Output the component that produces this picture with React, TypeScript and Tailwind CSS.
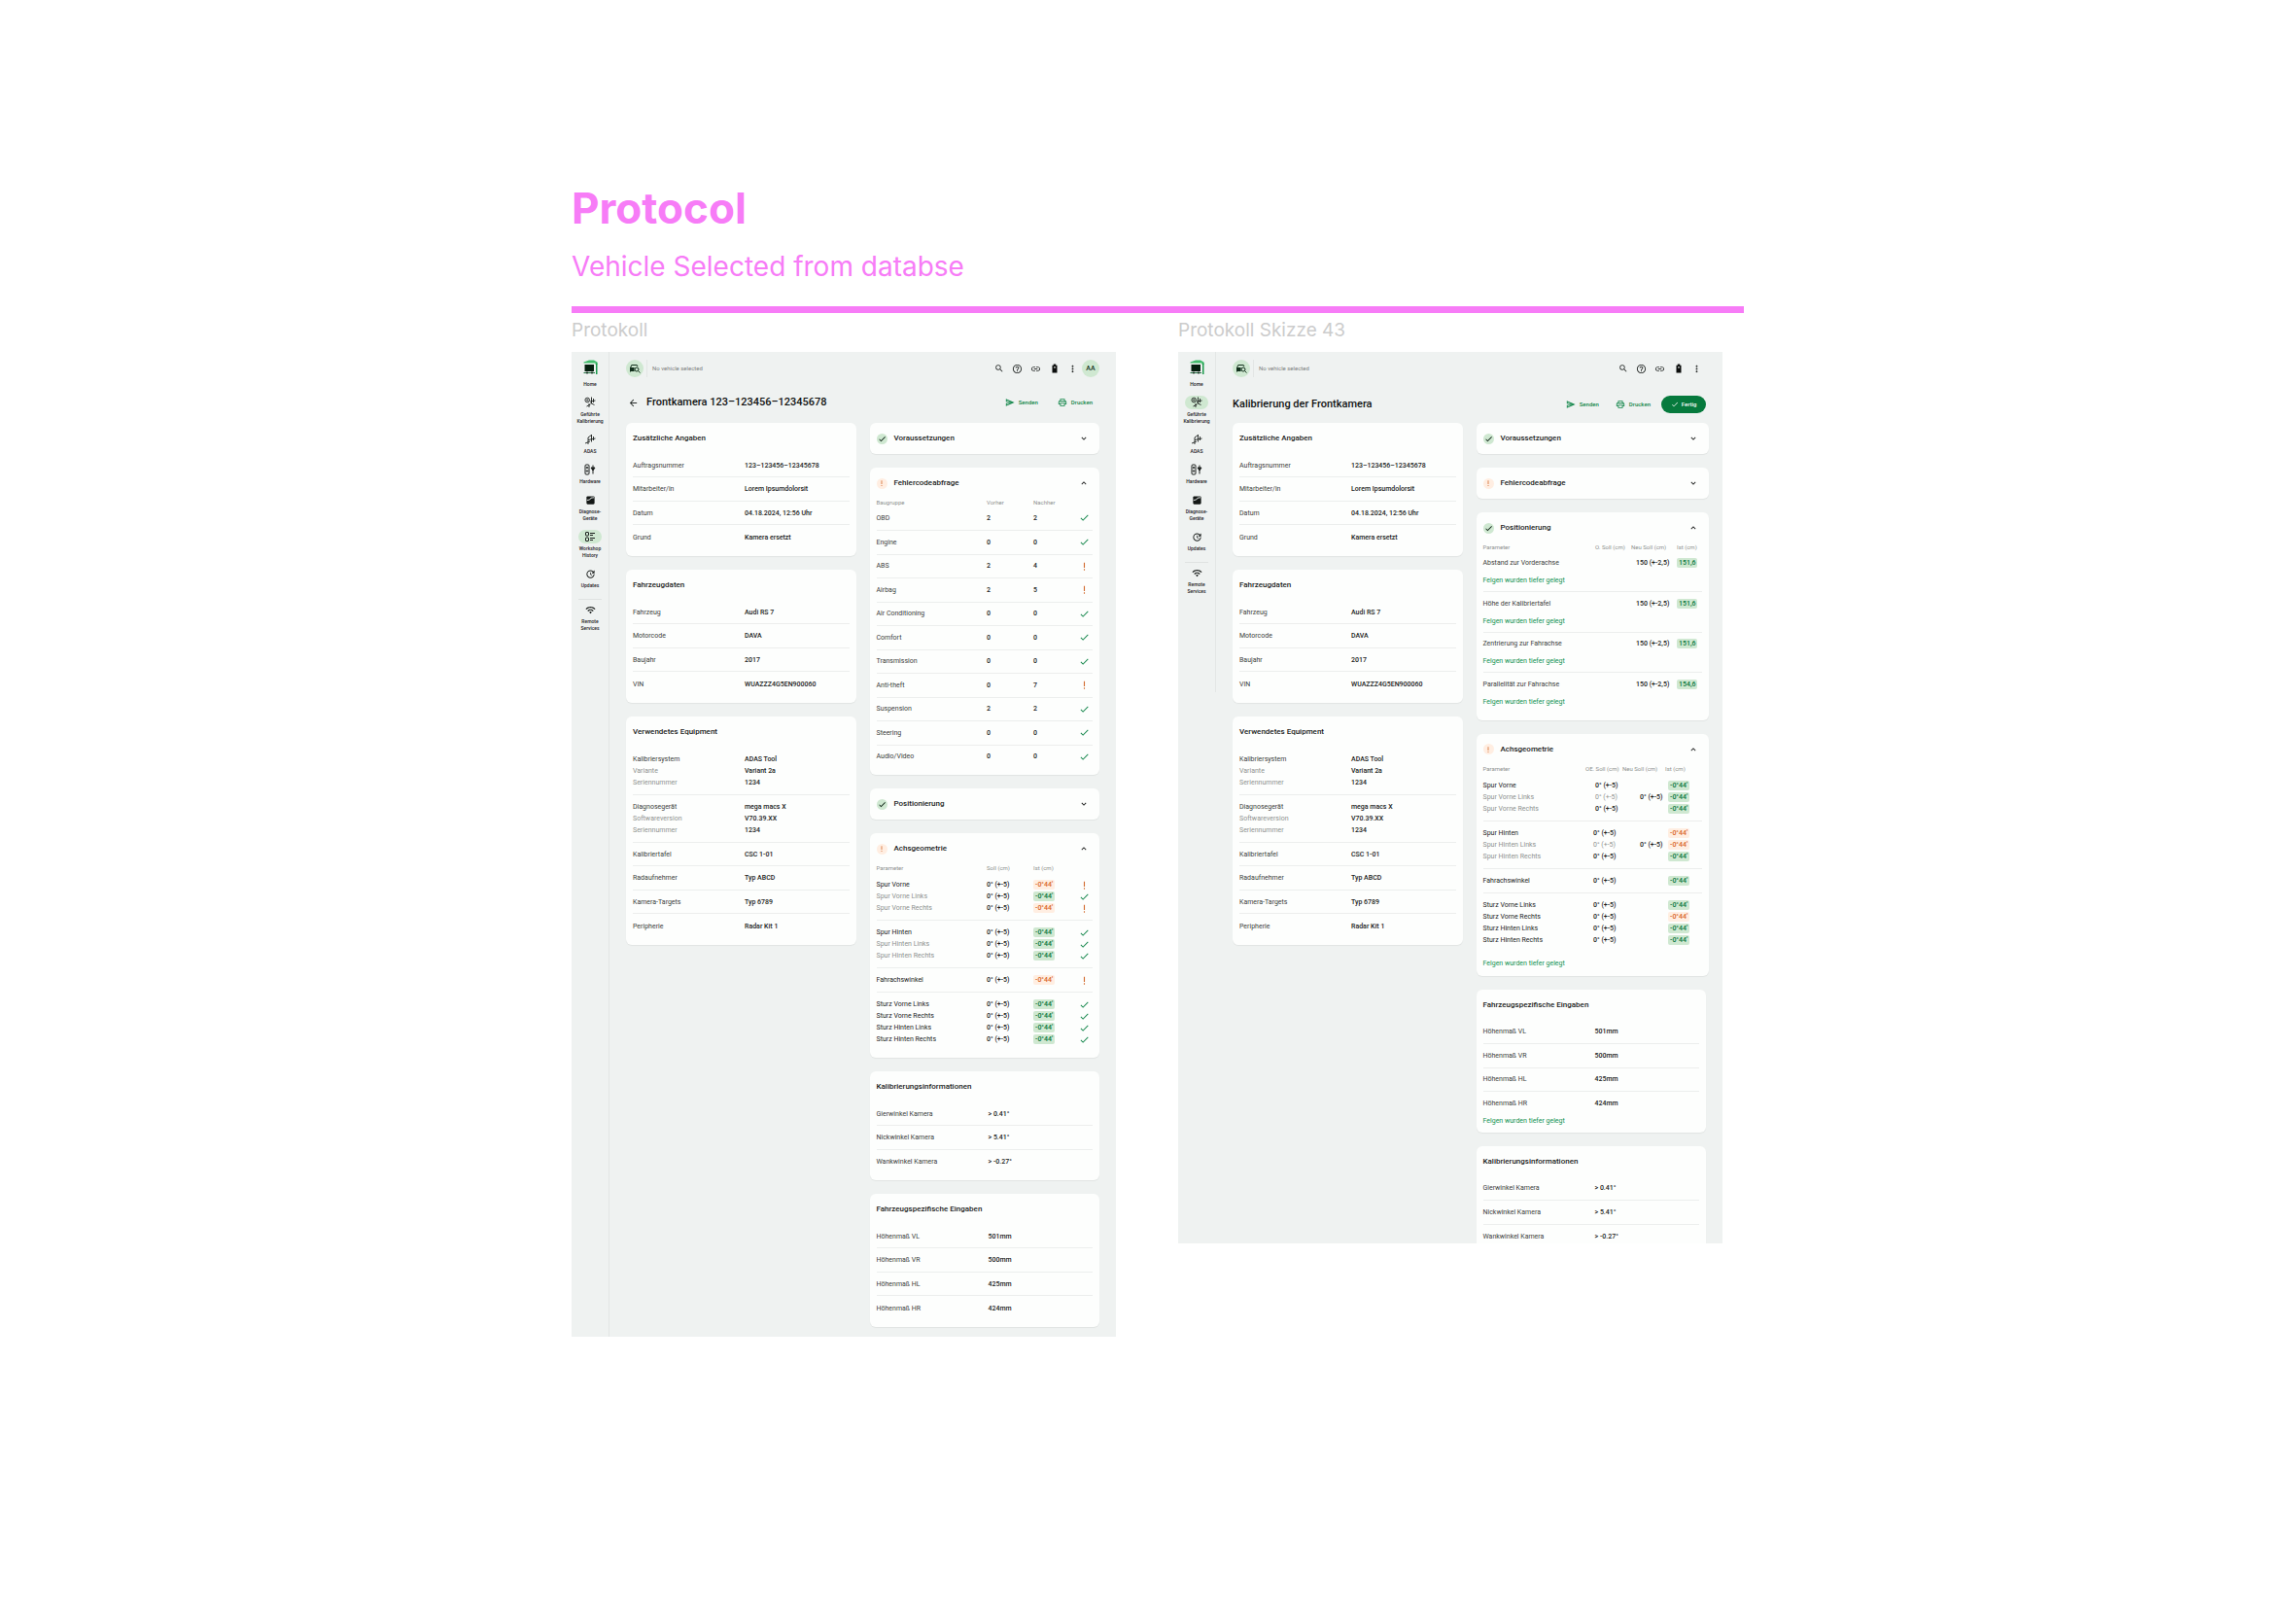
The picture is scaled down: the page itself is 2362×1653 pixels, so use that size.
import React from "react";
import type { ReactNode } from "react";
import {
  MdArrowBack,
  MdCheck,
  MdHelpOutline,
  MdKeyboardArrowDown,
  MdKeyboardArrowUp,
  MdLink,
  MdMoreVert,
  MdOutlinePrint,
  MdSearch,
  MdOutlineSend,
  MdUpdate,
  MdWifi,
} from "react-icons/md";

/* ---------- custom icons ---------- */

function HomeLogo() {
  return (
    <svg viewBox="0 0 30 32" className="h-[16px] w-[15px]" aria-hidden="true">
      <path d="M1 5 12 1h10l7 4v5h-4V7H1z" fill="#43bd6c" />
      <path d="M26 7h3v23h-3z" fill="#1c9a4c" />
      <path d="M3 10h19v14H3z" fill="#05200f" />
      <path d="M1 26h23v2H1z" fill="#1c6a3a" />
      <circle cx="8" cy="27" r="2" fill="#05200f" />
      <circle cx="18" cy="27" r="2" fill="#05200f" />
    </svg>
  );
}

function CalibrationIcon() {
  return (
    <svg viewBox="0 0 24 24" className="size-[12px]" fill="none" stroke="#1d211f" strokeWidth="1.8" aria-hidden="true">
      <circle cx="6.5" cy="7" r="4.6" />
      <circle cx="6.5" cy="7" r="1.4" />
      <path d="M15 1v13M12 10l11-2M5 20l8-4M10 14v8M13 13l8 4M19 4v8" />
    </svg>
  );
}

function AdasIcon() {
  return (
    <svg viewBox="0 0 24 24" className="size-[12px]" fill="none" stroke="#1d211f" strokeWidth="1.8" aria-hidden="true">
      <path d="M15 2v15M8 13l15-3M2 20l10-4M8 13v9M8 13V8l7-5M19 6v8" />
    </svg>
  );
}

function HardwareIcon() {
  return (
    <svg viewBox="0 0 24 24" className="size-[12px]" fill="none" stroke="#1d211f" strokeWidth="2" aria-hidden="true">
      <rect x="2" y="2" width="8" height="20" rx="2" />
      <circle cx="6" cy="8" r="1.5" />
      <circle cx="6" cy="15" r="1.5" />
      <path d="M18 3v18" />
      <path d="M14 8h8l-4 6z" fill="#1d211f" />
    </svg>
  );
}

function DeviceIcon() {
  return (
    <svg viewBox="0 0 24 24" className="size-[11px]" aria-hidden="true">
      <rect x="3" y="3" width="18" height="18" rx="2.5" fill="#141816" />
      <path d="M4 12l6-1 3-4 7-1" fill="none" stroke="#eff2f1" strokeWidth="2" />
    </svg>
  );
}

function HistoryIcon() {
  return (
    <svg viewBox="0 0 24 24" className="size-[12px]" fill="none" stroke="#1d211f" strokeWidth="2" aria-hidden="true">
      <rect x="3" y="3" width="6" height="7" rx="1" />
      <rect x="3" y="14" width="6" height="7" rx="1" />
      <path d="M12 5h10M12 9h6M12 15h10M12 19h6" />
    </svg>
  );
}

function CarSearchIcon() {
  return (
    <svg viewBox="0 0 24 24" className="size-[12px]" fill="none" stroke="#12301c" strokeWidth="2" aria-hidden="true">
      <path d="M3 19v-8l2.5-6h11L18 8" />
      <path d="M3 11h8M3 17h8" />
      <path d="M3 11h7v6H3z" fill="#12301c" />
      <circle cx="16" cy="14" r="4" />
      <path d="m19 17 4 4" />
    </svg>
  );
}

function BatteryIcon() {
  return (
    <svg viewBox="0 0 24 24" className="size-[10px]" aria-hidden="true">
      <path d="M9 1h6v3h3v19H6V4h3z" fill="#0b0d0c" />
      <path d="M10 8h4v3h-4z" fill="#eff2f1" />
    </svg>
  );
}

function WarnIcon({ className, label }: { className: string; label?: string }) {
  return (
    <svg viewBox="0 0 24 24" className={className} aria-label={label} aria-hidden={label ? undefined : true}>
      <path d="M10.8 4h2.4v11h-2.4zM10.8 18h2.4v3h-2.4z" fill="#d2692c" />
    </svg>
  );
}

/* ---------- small building blocks ---------- */

const value = "font-medium text-[#1a1c1b]";

function StatusBadge({ ok }: { ok: boolean }) {
  return ok ? (
    <span className="grid size-[11px] place-items-center rounded-full bg-[#cfe8d1] text-[#0f2417]">
      <MdCheck className="size-[9px]" />
    </span>
  ) : (
    <span className="grid size-[11px] place-items-center rounded-full bg-[#ffeee2]">
      <WarnIcon className="size-[8px]" />
    </span>
  );
}

function Mark({ ok }: { ok: boolean }) {
  return ok ? (
    <MdCheck className="ml-auto size-[11px] text-[#108548]" aria-label="OK" />
  ) : (
    <WarnIcon className="ml-auto size-[11px]" label="Warnung" />
  );
}

function Chip({ ok = true, children }: { ok?: boolean; children: ReactNode }) {
  return (
    <span
      className={
        ok
          ? "inline-block rounded-[2px] bg-[#cfe8d1] px-[2px] leading-[10px] font-medium text-[#04763a]"
          : "inline-block rounded-[2px] bg-[#ffeee2] px-[2px] leading-[10px] font-medium text-[#d9651f]"
      }
    >
      {children}
    </span>
  );
}

function Card({ title, children }: { title: string; children: ReactNode }) {
  return (
    <section className="rounded-[6px] bg-[#fdfefd] px-[7px] pb-[7px] shadow-[0_1px_1px_rgba(0,0,0,0.06)]">
      <h3 className="flex h-8 items-center text-[8px] font-medium text-[#1a1c1b]">{title}</h3>
      {children}
    </section>
  );
}

function Accordion({
  title,
  ok,
  wide = false,
  children,
}: {
  title: string;
  ok: boolean;
  wide?: boolean;
  children?: ReactNode;
}) {
  return (
    <section
      className={`rounded-[6px] bg-[#fdfefd] px-[7px] shadow-[0_1px_1px_rgba(0,0,0,0.06)] ${children ? "pb-[7px]" : ""} ${wide ? "-mr-[3px]" : ""}`}
    >
      <h3>
        <button
          type="button"
          aria-expanded={Boolean(children)}
          className="flex h-8 w-full items-center gap-[7px] pr-1 text-left text-[8px] font-medium text-[#1a1c1b]"
        >
          <StatusBadge ok={ok} />
          <span className="flex-1">{title}</span>
          {children ? <MdKeyboardArrowUp className="size-[10px]" /> : <MdKeyboardArrowDown className="size-[10px]" />}
        </button>
      </h3>
      {children}
    </section>
  );
}

type Pair = [string, string];

function Details({ rows }: { rows: Pair[] }) {
  return (
    <dl>
      {rows.map(([k, v]) => (
        <div
          key={k}
          className="flex h-6 items-center border-b border-[#eceeed] last:border-b-0 even:h-[25px]"
        >
          <dt className="w-[115px] text-[#3a3d3b]">{k}</dt>
          <dd className={value}>{v}</dd>
        </div>
      ))}
    </dl>
  );
}

function Note({ children }: { children: ReactNode }) {
  return <p className="text-[#0f9150]">{children}</p>;
}

/* ---------- shared data ---------- */

const extras: Pair[] = [
  ["Auftragsnummer", "123–123456–12345678"],
  ["Mitarbeiter/in", "Lorem Ipsumdolorsit"],
  ["Datum", "04.18.2024, 12:56 Uhr"],
  ["Grund", "Kamera ersetzt"],
];

const vehicle: Pair[] = [
  ["Fahrzeug", "Audi RS 7"],
  ["Motorcode", "DAVA"],
  ["Baujahr", "2017"],
  ["VIN", "WUAZZZ4G5EN900060"],
];

const equipment: Pair[][] = [
  [
    ["Kalibriersystem", "ADAS Tool"],
    ["Variante", "Variant 2a"],
    ["Seriennummer", "1234"],
  ],
  [
    ["Diagnosegerät", "mega macs X"],
    ["Softwareversion", "V70.39.XX"],
    ["Seriennummer", "1234"],
  ],
];

const equipmentSingles: Pair[] = [
  ["Kalibriertafel", "CSC 1-01"],
  ["Radaufnehmer", "Typ ABCD"],
  ["Kamera-Targets", "Typ 6789"],
  ["Peripherie", "Radar Kit 1"],
];

const angles: Pair[] = [
  ["Gierwinkel Kamera", "> 0.41°"],
  ["Nickwinkel Kamera", "> 5.41°"],
  ["Wankwinkel Kamera", "> -0.27°"],
];

const heights: Pair[] = [
  ["Höhenmaß VL", "501mm"],
  ["Höhenmaß VR", "500mm"],
  ["Höhenmaß HL", "425mm"],
  ["Höhenmaß HR", "424mm"],
];

const faults: [string, number, number, boolean][] = [
  ["OBD", 2, 2, true],
  ["Engine", 0, 0, true],
  ["ABS", 2, 4, false],
  ["Airbag", 2, 5, false],
  ["Air Conditioning", 0, 0, true],
  ["Comfort", 0, 0, true],
  ["Transmission", 0, 0, true],
  ["Anti-theft", 0, 7, false],
  ["Suspension", 2, 2, true],
  ["Steering", 0, 0, true],
  ["Audio/Video", 0, 0, true],
];

type AxleRow = { name: string; ok: boolean; muted?: boolean; fresh?: boolean };

const axle: AxleRow[][] = [
  [
    { name: "Spur Vorne", ok: false },
    { name: "Spur Vorne Links", ok: true, muted: true },
    { name: "Spur Vorne Rechts", ok: false, muted: true },
  ],
  [
    { name: "Spur Hinten", ok: true },
    { name: "Spur Hinten Links", ok: true, muted: true },
    { name: "Spur Hinten Rechts", ok: true, muted: true },
  ],
  [{ name: "Fahrachswinkel", ok: false }],
  [
    { name: "Sturz Vorne Links", ok: true },
    { name: "Sturz Vorne Rechts", ok: true },
    { name: "Sturz Hinten Links", ok: true },
    { name: "Sturz Hinten Rechts", ok: true },
  ],
];

const axleSketch: AxleRow[][] = [
  [
    { name: "Spur Vorne", ok: true },
    { name: "Spur Vorne Links", ok: true, muted: true, fresh: true },
    { name: "Spur Vorne Rechts", ok: true, muted: true },
  ],
  [
    { name: "Spur Hinten", ok: false },
    { name: "Spur Hinten Links", ok: false, muted: true, fresh: true },
    { name: "Spur Hinten Rechts", ok: true, muted: true },
  ],
  [{ name: "Fahrachswinkel", ok: true }],
  [
    { name: "Sturz Vorne Links", ok: true },
    { name: "Sturz Vorne Rechts", ok: false },
    { name: "Sturz Hinten Links", ok: true },
    { name: "Sturz Hinten Rechts", ok: true },
  ],
];

const positions: Pair[] = [
  ["Abstand zur Vorderachse", "151,6"],
  ["Höhe der Kalibriertafel", "151,6"],
  ["Zentrierung zur Fahrachse", "151,6"],
  ["Parallelität zur Fahrachse", "154,6"],
];

/* ---------- tables ---------- */

const headRow = "text-left text-[6px] leading-[8px] whitespace-nowrap text-[#8d918f]";
const group =
  "border-b border-[#eceeed] last:border-b-0 [&>tr:first-child>td]:pt-[6px] [&>tr:last-child>td]:pb-[6px]";

function FaultTable() {
  return (
    <table className="w-full table-fixed">
      <colgroup>
        <col />
        <col className="w-[48px]" />
        <col className="w-[43px]" />
        <col className="w-[18px]" />
      </colgroup>
      <thead>
        <tr className={headRow}>
          <th className="font-normal">Baugruppe</th>
          <th className="font-normal">Vorher</th>
          <th className="font-normal">Nachher</th>
          <th />
        </tr>
      </thead>
      <tbody>
        {faults.map(([name, before, after, ok]) => (
          <tr key={name} className="h-6 border-b border-[#eceeed] last:border-b-0 even:h-[25px]">
            <td className="text-[#3a3d3b]">{name}</td>
            <td className={value}>{before}</td>
            <td className={value}>{after}</td>
            <td className="pr-[3px]">
              <Mark ok={ok} />
            </td>
          </tr>
        ))}
      </tbody>
    </table>
  );
}

function AxleTable() {
  return (
    <table className="w-full table-fixed">
      <colgroup>
        <col />
        <col className="w-[48px]" />
        <col className="w-[43px]" />
        <col className="w-[18px]" />
      </colgroup>
      <thead>
        <tr className={headRow}>
          <th className="pb-px font-normal">Parameter</th>
          <th className="pb-px font-normal">Soll (cm)</th>
          <th className="pb-px font-normal">Ist (cm)</th>
          <th />
        </tr>
      </thead>
      {axle.map((rows) => (
        <tbody key={rows[0].name} className={group}>
          {rows.map((r) => (
            <tr key={r.name} className="leading-[12px] whitespace-nowrap">
              <td className={r.muted ? "text-[#8d918f]" : "text-[#1a1c1b]"}>{r.name}</td>
              <td className={value}>0° (+-5)</td>
              <td>
                <Chip ok={r.ok}>-0°44'</Chip>
              </td>
              <td className="pr-[3px]">
                <Mark ok={r.ok} />
              </td>
            </tr>
          ))}
        </tbody>
      ))}
    </table>
  );
}

function AxleSketchTable() {
  return (
    <table className="w-full table-fixed">
      <colgroup>
        <col />
        <col className="w-[38px]" />
        <col className="w-[44px]" />
        <col className="w-[38px]" />
      </colgroup>
      <thead>
        <tr className={headRow}>
          <th className="pb-px font-normal">Parameter</th>
          <th className="pb-px font-normal">OE. Soll (cm)</th>
          <th className="pb-px font-normal">Neu Soll (cm)</th>
          <th className="pb-px font-normal">Ist (cm)</th>
        </tr>
      </thead>
      {axleSketch.map((rows, i) => (
        <tbody key={rows[0].name} className={group}>
          {rows.map((r) => (
            <tr key={r.name} className="leading-[12px] whitespace-nowrap">
              <td className={r.muted ? "text-[#8d918f]" : "text-[#1a1c1b]"}>{r.name}</td>
              <td
                className={`${i === 0 ? "pl-[10px]" : "pl-2"} ${r.fresh ? "text-[#8d918f]" : "font-medium text-[#1a1c1b]"}`}
              >
                0° (+-5)
              </td>
              <td className="pl-[18px] font-medium text-[#1a1c1b]">{r.fresh ? "0° (+-5)" : ""}</td>
              <td className="pl-[3px]">
                <Chip ok={r.ok}>-0°44'</Chip>
              </td>
            </tr>
          ))}
        </tbody>
      ))}
    </table>
  );
}

function PositionTable() {
  return (
    <table className="w-full table-fixed">
      <colgroup>
        <col />
        <col className="w-[37px]" />
        <col className="w-[47px]" />
        <col className="w-[26px]" />
      </colgroup>
      <thead>
        <tr className={headRow}>
          <th className="font-normal">Parameter</th>
          <th className="font-normal">O. Soll (cm)</th>
          <th className="font-normal">Neu Soll (cm)</th>
          <th className="font-normal">Ist (cm)</th>
        </tr>
      </thead>
      {positions.map(([name, actual]) => (
        <tbody key={name} className="border-b border-[#eceeed] last:border-b-0 last:[&>tr:last-child>td]:pb-[6px]">
          <tr className="h-6 whitespace-nowrap">
            <td className="text-[#3a3d3b]">{name}</td>
            <td />
            <td className={`pl-[5px] ${value}`}>150 (+-2,5)</td>
            <td>
              <Chip>{actual}</Chip>
            </td>
          </tr>
          <tr>
            <td colSpan={4} className="pb-[5px] leading-[12px]">
              <Note>Felgen wurden tiefer gelegt</Note>
            </td>
          </tr>
        </tbody>
      ))}
    </table>
  );
}

/* ---------- frame chrome ---------- */

type NavItem = { label: string; icon: ReactNode };

const guided: NavItem = { label: "Geführte Kalibrierung", icon: <CalibrationIcon /> };
const navBase: NavItem[] = [
  guided,
  { label: "ADAS", icon: <AdasIcon /> },
  { label: "Hardware", icon: <HardwareIcon /> },
  { label: "Diagnose- Geräte", icon: <DeviceIcon /> },
];
const history: NavItem = { label: "Workshop History", icon: <HistoryIcon /> };
const updates: NavItem = { label: "Updates", icon: <MdUpdate className="size-[11px]" /> };

function NavLink({ item, active }: { item: NavItem; active: boolean }) {
  return (
    <a
      href="#"
      aria-current={active ? "page" : undefined}
      className="flex w-full flex-col items-center gap-[2px] text-center text-[5px] leading-[7px] font-medium text-[#1d211f]"
    >
      <span className={`grid h-[14px] w-6 place-items-center rounded-full ${active ? "bg-[#cfe8d1]" : ""}`}>
        {item.icon}
      </span>
      <span className="w-[30px]">{item.label}</span>
    </a>
  );
}

function Sidebar({ items, active, short = false }: { items: NavItem[]; active: string; short?: boolean }) {
  return (
    <nav
      className={`flex w-[39px] shrink-0 flex-col items-center gap-2 border-r border-[#e3e6e5] pt-[8px] ${short ? "h-[350px]" : ""}`}
    >
      <a
        href="#"
        className="flex flex-col items-center gap-[6px] text-[5px] leading-[7px] font-medium text-[#1d211f]"
      >
        <HomeLogo />
        Home
      </a>
      {items.map((item) => (
        <NavLink key={item.label} item={item} active={item.label === active} />
      ))}
      <div className="flex flex-col items-center gap-[3px] pt-[2px]">
        <hr className="w-6 border-[#dfe2e1]" />
        <NavLink item={{ label: "Remote Services", icon: <MdWifi className="size-[11px]" /> }} active={false} />
      </div>
    </nav>
  );
}

function IconButton({ label, children }: { label: string; children: ReactNode }) {
  return (
    <button type="button" aria-label={label} className="grid w-[19px] place-items-center text-[#2b2f2d]">
      {children}
    </button>
  );
}

function TopBar({ user }: { user?: string }) {
  return (
    <header className="flex h-[18px] items-center text-[6px]">
      <button
        type="button"
        aria-label="Fahrzeug suchen"
        className="mr-[3px] grid size-[18px] place-items-center rounded-full bg-[#cfe8d1]"
      >
        <CarSearchIcon />
      </button>
      <p className="flex h-full flex-1 items-center border-l border-[#e3e6e5] pl-[5px] text-[#7d817f]">
        No vehicle selected
      </p>
      <IconButton label="Suchen">
        <MdSearch className="size-[10px]" />
      </IconButton>
      <IconButton label="Hilfe">
        <MdHelpOutline className="size-[11px]" />
      </IconButton>
      <IconButton label="Verbindung">
        <MdLink className="size-[11px]" />
      </IconButton>
      <IconButton label="Batterie">
        <BatteryIcon />
      </IconButton>
      <IconButton label="Mehr">
        <MdMoreVert className="size-[11px]" />
      </IconButton>
      {user ? (
        <span className="grid size-[18px] place-items-center rounded-full bg-[#cfe8d1] text-[7px] font-medium text-[#14331f]">
          {user}
        </span>
      ) : null}
    </header>
  );
}

function TextButton({ icon, children }: { icon: ReactNode; children: ReactNode }) {
  return (
    <button type="button" className="flex items-center gap-1 text-[6px] font-medium text-[#108548]">
      {icon}
      {children}
    </button>
  );
}

function LeftColumn() {
  return (
    <div className="flex flex-col gap-[14px]">
      <Card title="Zusätzliche Angaben">
        <Details rows={extras} />
      </Card>
      <Card title="Fahrzeugdaten">
        <Details rows={vehicle} />
      </Card>
      <Card title="Verwendetes Equipment">
        {equipment.map((rows) => (
          <dl key={rows[0][0]} className="border-b border-[#eceeed] py-[6px] leading-[12px]">
            {rows.map(([k, v], i) => (
              <div key={k} className="flex">
                <dt className={i === 0 ? "w-[115px] text-[#3a3d3b]" : "w-[115px] text-[#8d918f]"}>{k}</dt>
                <dd className={value}>{v}</dd>
              </div>
            ))}
          </dl>
        ))}
        <Details rows={equipmentSingles} />
      </Card>
    </div>
  );
}

function ProtocolFrame() {
  return (
    <article className="flex bg-[#eff2f1] font-[Roboto,sans-serif] text-[7px] leading-[8px]">
      <Sidebar items={[...navBase, history, updates]} active="Workshop History" />
      <div className="flex-1 px-[17px] pt-[8px] pb-[10px]">
        <TopBar user="AA" />
        <div className="mt-[17px] mb-[12px] flex h-[18px] items-center">
          <button type="button" aria-label="Zurück" className="mr-[8px] pl-[2px] text-[#2b2f2d]">
            <MdArrowBack className="size-[11px]" />
          </button>
          <h2 className="flex-1 text-[11px] leading-[12px] font-medium text-[#111312]">
            Frontkamera 123–123456–12345678
          </h2>
          <div className="flex gap-5 pr-[7px]">
            <TextButton icon={<MdOutlineSend className="size-[10px]" />}>Senden</TextButton>
            <TextButton icon={<MdOutlinePrint className="size-[10px]" />}>Drucken</TextButton>
          </div>
        </div>
        <div className="grid grid-cols-2 items-start gap-[14px]">
          <LeftColumn />
          <div className="flex flex-col gap-[14px]">
            <Accordion title="Voraussetzungen" ok />
            <Accordion title="Fehlercodeabfrage" ok={false}>
              <FaultTable />
            </Accordion>
            <Accordion title="Positionierung" ok />
            <Accordion title="Achsgeometrie" ok={false}>
              <AxleTable />
            </Accordion>
            <Card title="Kalibrierungsinformationen">
              <Details rows={angles} />
            </Card>
            <Card title="Fahrzeugspezifische Eingaben">
              <Details rows={heights} />
            </Card>
          </div>
        </div>
      </div>
    </article>
  );
}

function SketchFrame() {
  return (
    <article className="flex h-[917px] items-start overflow-hidden bg-[#eff2f1] font-[Roboto,sans-serif] text-[7px] leading-[8px]">
      <Sidebar items={[...navBase, updates]} active={guided.label} short />
      <div className="flex-1 px-[17px] pt-[8px]">
        <TopBar />
        <div className="mt-[19px] mb-[10px] flex h-[18px] items-center">
          <h2 className="flex-1 text-[11px] leading-[12px] font-medium text-[#111312]">
            Kalibrierung der Frontkamera
          </h2>
          <div className="flex gap-[17px] pr-[11px]">
            <TextButton icon={<MdOutlineSend className="size-[10px]" />}>Senden</TextButton>
            <TextButton icon={<MdOutlinePrint className="size-[10px]" />}>Drucken</TextButton>
          </div>
          <button
            type="button"
            className="flex h-[18px] w-[46px] items-center justify-center gap-[3px] rounded-full bg-[#067a3d] text-[6px] font-medium text-white"
          >
            <MdCheck className="size-[8px]" />
            Fertig
          </button>
        </div>
        <div className="grid grid-cols-2 items-start gap-[14px]">
          <LeftColumn />
          <div className="flex flex-col gap-[14px]">
            <Accordion title="Voraussetzungen" ok wide />
            <Accordion title="Fehlercodeabfrage" ok={false} wide />
            <Accordion title="Positionierung" ok wide>
              <PositionTable />
            </Accordion>
            <Accordion title="Achsgeometrie" ok={false} wide>
              <AxleSketchTable />
              <div className="pt-[6px] leading-[12px]">
                <Note>Felgen wurden tiefer gelegt</Note>
              </div>
            </Accordion>
            <Card title="Fahrzeugspezifische Eingaben">
              <Details rows={heights} />
              <div className="leading-[10px]">
                <Note>Felgen wurden tiefer gelegt</Note>
              </div>
            </Card>
            <Card title="Kalibrierungsinformationen">
              <Details rows={angles} />
            </Card>
          </div>
        </div>
      </div>
    </article>
  );
}

export default function App() {
  return (
    <main className="min-h-screen bg-white pt-[187px] pr-[568px] pb-16 pl-[588px] font-[Inter,sans-serif]">
      <h1 className="text-[44px] leading-[54px] font-bold text-[#f77cf7]">Protocol</h1>
      <p className="mt-[15px] text-[28px] leading-[36px] text-[#f77cf7]">Vehicle Selected from databse</p>
      <hr className="mt-[23px] border-t-[7px] border-[#f77cf7]" />
      <div className="flex items-start gap-16 pr-[22px]">
        <div className="flex-1">
          <p className="mb-[10px] pt-[6px] text-[19px] leading-6 text-[#cccccc]">Protokoll</p>
          <ProtocolFrame />
        </div>
        <div className="flex-1">
          <p className="mb-[10px] pt-[6px] text-[19px] leading-6 text-[#cccccc]">Protokoll Skizze 43</p>
          <SketchFrame />
        </div>
      </div>
    </main>
  );
}
